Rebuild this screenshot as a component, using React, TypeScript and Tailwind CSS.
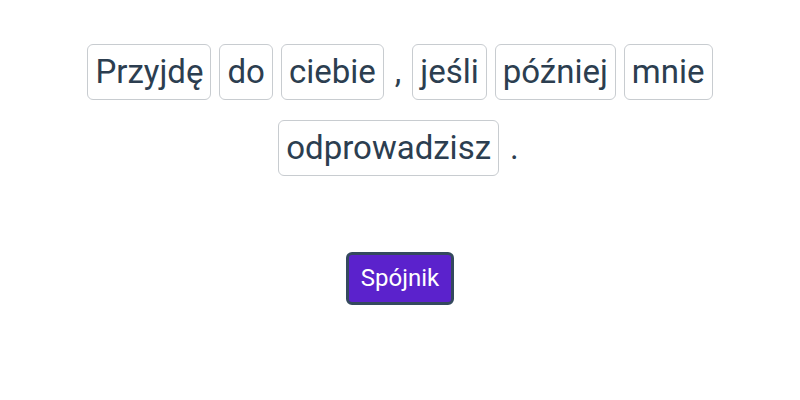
import React from "react";

const row: { t: string; box: boolean }[] = [
  { t: "Przyjdę", box: true },
  { t: "do", box: true },
  { t: "ciebie", box: true },
  { t: ",", box: false },
  { t: "jeśli", box: true },
  { t: "później", box: true },
  { t: "mnie", box: true },
  { t: "odprowadzisz", box: true },
  { t: ".", box: false },
];

export default function App() {
  return (
    <div
      className="w-[800px] h-[400px] bg-white flex flex-col items-center pt-[44px]"
      style={{ fontFamily: "Roboto, 'Noto Sans', sans-serif" }}
    >
      <div className="w-[660px] flex flex-wrap justify-center gap-x-2 gap-y-[20px] text-[33px] leading-[38px] text-[#2c3e50]">
        {row.map((w, i) =>
          w.box ? (
            <span
              key={i}
              className="border border-[#c8ccd0] rounded-[6px] px-[7px] py-2"
            >
              {w.t}
            </span>
          ) : (
            <span key={i} className="py-2 px-[2px] border border-transparent">
              {w.t}
            </span>
          )
        )}
      </div>
      <button className="mt-[76px] bg-[#5b22cc] text-white border-[3px] border-[#34495e] rounded-[6px] px-[12px] py-[9px] text-[24px] leading-[29px]">
        Spójnik
      </button>
    </div>
  );
}
